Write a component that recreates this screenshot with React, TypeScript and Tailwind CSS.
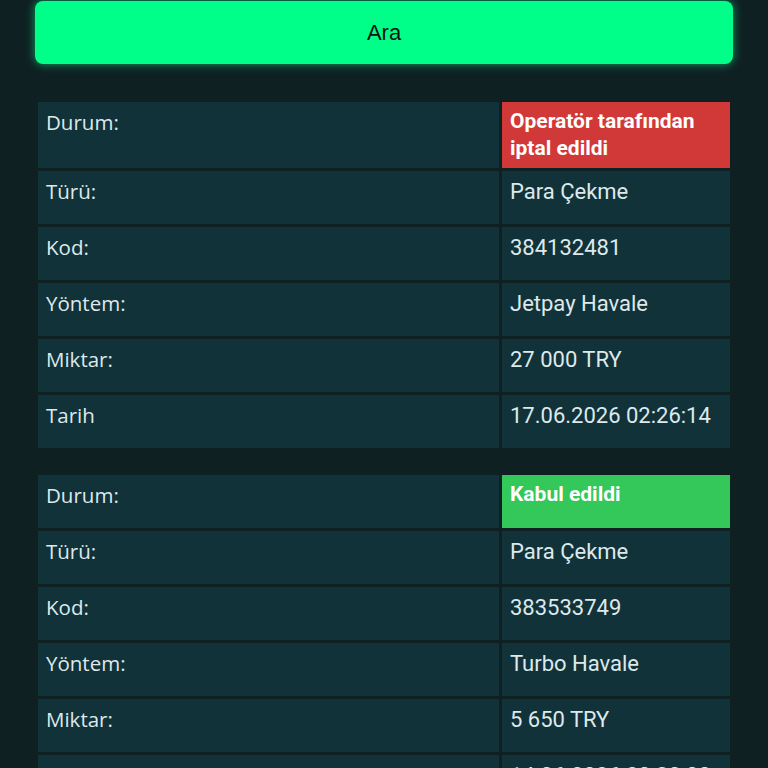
import React from "react";

type Row = { label: string; value: string };
type Item = { status: string; statusColor: "red" | "green"; rows: Row[] };

const items: Item[] = [
  {
    status: "Operatör tarafından iptal edildi",
    statusColor: "red",
    rows: [
      { label: "Türü:", value: "Para Çekme" },
      { label: "Kod:", value: "384132481" },
      { label: "Yöntem:", value: "Jetpay Havale" },
      { label: "Miktar:", value: "27 000 TRY" },
      { label: "Tarih", value: "17.06.2026 02:26:14" },
    ],
  },
  {
    status: "Kabul edildi",
    statusColor: "green",
    rows: [
      { label: "Türü:", value: "Para Çekme" },
      { label: "Kod:", value: "383533749" },
      { label: "Yöntem:", value: "Turbo Havale" },
      { label: "Miktar:", value: "5 650 TRY" },
      { label: "Tarih", value: "14.06.2026 20:30:00" },
    ],
  },
];

const labelCls =
  "bg-[#12323a] text-[#dde9eb] text-[20.5px] leading-[28px] pt-[6px] pl-[8px] font-['Open_Sans',sans-serif] min-h-[53px]";
const valueCls =
  "bg-[#12323a] text-[#dde9eb] text-[22px] leading-[28px] pt-[7px] pl-[8px] font-['Roboto',sans-serif] min-h-[53px] whitespace-nowrap";

function Card({ item }: { item: Item }) {
  return (
    <div className="grid grid-cols-[461px_228px] gap-[3px] p-[3px] w-[698px]">
      <div className={labelCls + " min-h-[52px]"}>Durum:</div>
      <div
        className={
          (item.statusColor === "red" ? "bg-[#d13838]" : "bg-[#34c759]") +
          " text-white font-bold text-[21px] leading-[27px] pt-[6px] pb-[6px] pl-[8px] pr-[8px] font-['Roboto',sans-serif] min-h-[52px]"
        }
      >
        {item.status}
      </div>
      {item.rows.map((r) => (
        <React.Fragment key={r.label}>
          <div className={labelCls}>{r.label}</div>
          <div className={valueCls}>{r.value}</div>
        </React.Fragment>
      ))}
    </div>
  );
}

export default function App() {
  return (
    <div className="w-[768px] bg-[#0f2023] overflow-hidden h-[768px]">
      <div className="pl-[35px] pt-px">
        <button className="w-[698px] h-[63px] rounded-[8px] bg-[#00ff88] shadow-[0_0_10px_rgba(0,255,136,0.6)] text-[#111] text-[22px] font-['Liberation_Sans',Arial,sans-serif] flex items-center justify-center">
          Ara
        </button>
        <div className="mt-[35px] flex flex-col gap-[21px]">
          {items.map((it, i) => (
            <Card key={i} item={it} />
          ))}
        </div>
      </div>
    </div>
  );
}
